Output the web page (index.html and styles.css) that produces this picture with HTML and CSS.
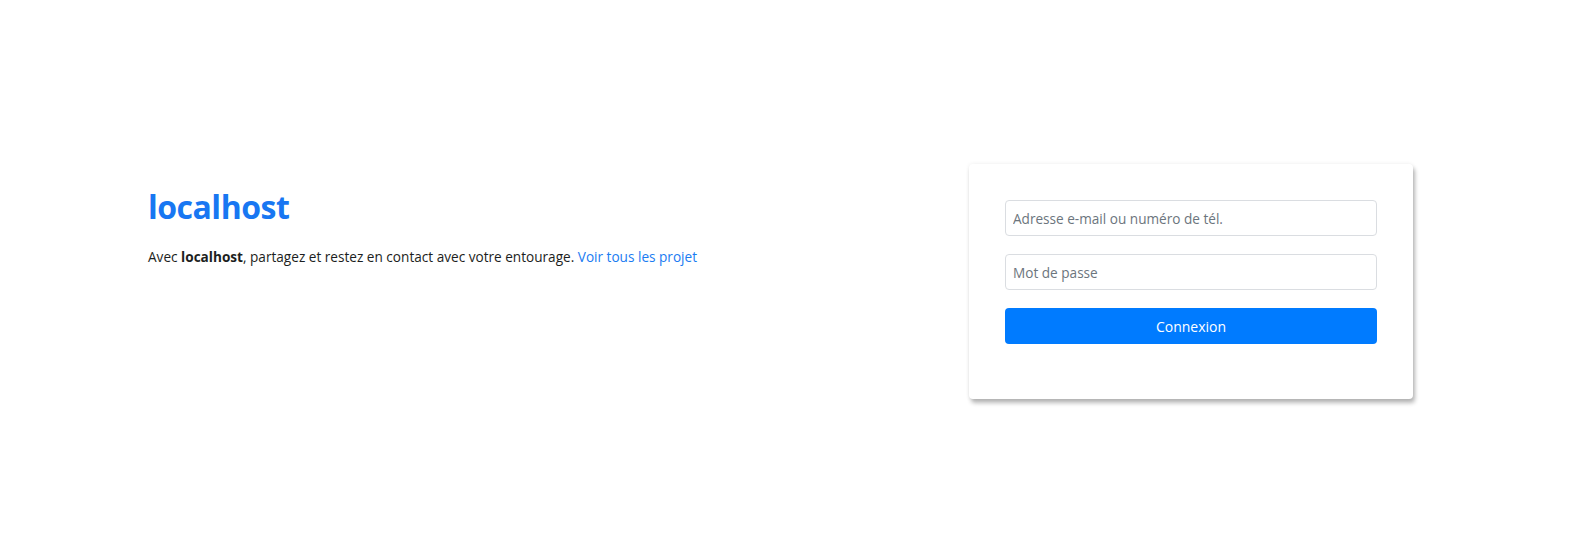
FILE: index.html
```html
<!DOCTYPE html>
<html lang="fr">
<head>
<meta charset="utf-8">
<title>localhost</title>
<link rel="stylesheet" href="styles.css">
</head>
<body>
<main class="page">
  <section class="intro">
    <h1 class="brand">localhost</h1>
    <p class="tagline">Avec <strong>localhost</strong>, partagez et restez en contact avec votre entourage. <a href="#" class="link">Voir tous les projet</a></p>
  </section>
  <section class="card">
    <form class="login">
      <input class="field" type="text" placeholder="Adresse e-mail ou numéro de tél.">
      <input class="field" type="password" placeholder="Mot de passe">
      <button class="btn" type="button">Connexion</button>
    </form>
  </section>
</main>
</body>
</html>
```
FILE: styles.css
```css
html, body {
  margin: 0;
  padding: 0;
  background: #fff;
}
body {
  font-family: "Open Sans", "Noto Sans", sans-serif;
  color: #1c1e21;
  min-height: 100vh;
}
.page {
  display: flex;
  justify-content: space-between;
  align-items: flex-start;
  padding: 164px 161px 140px 148px;
}
.intro {
  padding-top: 25px;
}
.brand {
  margin: 0;
  font-size: 32px;
  font-weight: 700;
  line-height: 36px;
  color: #1877f2;
  letter-spacing: -0.5px;
}
.tagline {
  margin: 22px 0 0;
  font-size: 13.6px;
  line-height: 20px;
  color: #1c1e21;
}
.tagline strong {
  font-weight: 700;
}
.link {
  color: #1a7cf2;
  text-decoration: none;
}
.card {
  width: 444px;
  box-sizing: border-box;
  padding: 36px 36px 55px;
  background: #fff;
  border-radius: 4px;
  box-shadow: 0 0 4px rgba(0,0,0,0.07), 2px 4px 4px rgba(0,0,0,0.28);
}
.login {
  display: flex;
  flex-direction: column;
  gap: 18px;
}
.field {
  height: 36px;
  box-sizing: border-box;
  width: 100%;
  padding: 0 7px;
  border: 1px solid #dadde1;
  border-radius: 4px;
  font-family: inherit;
  font-size: 13.6px;
  color: #333;
}
.field::placeholder {
  color: #6c757d;
}
.btn {
  height: 36px;
  width: 100%;
  border: none;
  border-radius: 4px;
  background: #007bff;
  color: #fff;
  font-family: inherit;
  font-size: 14px;
}
```
